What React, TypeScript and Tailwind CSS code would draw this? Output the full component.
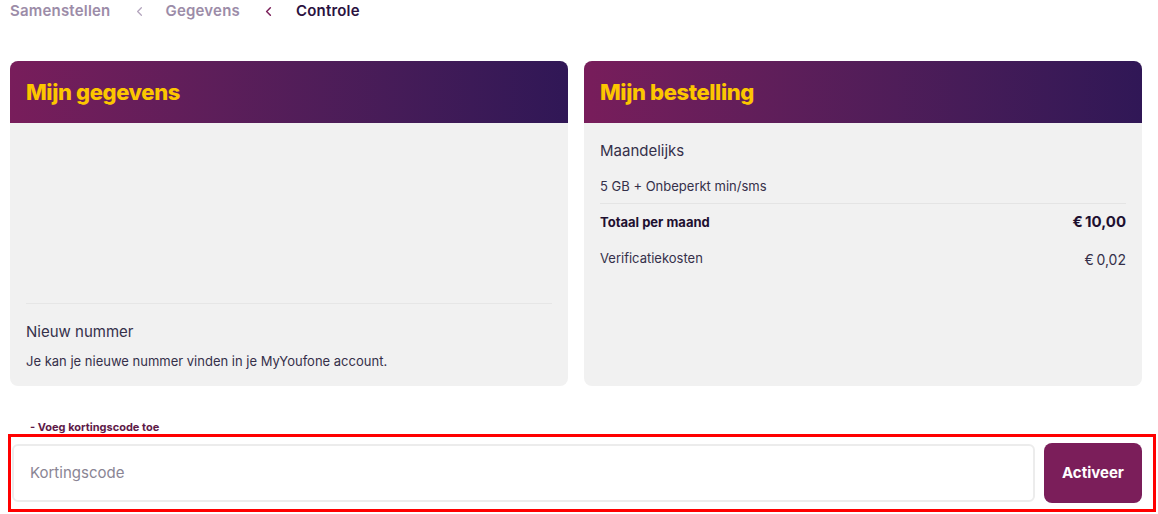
import { ChevronLeft } from "lucide-react";

const font = { fontFamily: "Inter, 'Noto Sans', sans-serif" };

function CardHeader({ title }: { title: string }) {
  return (
    <div className="flex h-[62px] items-center rounded-t-lg bg-gradient-to-r from-[#781d5b] to-[#301756] px-4">
      <h2 className="text-[22px] font-extrabold tracking-[-0.4px] text-[#fcc600]">{title}</h2>
    </div>
  );
}

export default function App() {
  return (
    <div className="h-[514px] w-[1158px] overflow-hidden bg-white text-[#2d2440]" style={font}>
      {/* Breadcrumb */}
      <nav className="flex h-[22px] items-center pl-[10px] text-[15px] font-semibold tracking-[0.2px]">
        <span className="text-[#9c8ca8]">Samenstellen</span>
        <ChevronLeft className="ml-[22px] mr-[18px] text-[#b3a4bd]" size={15} strokeWidth={2} />
        <span className="text-[#9c8ca8]">Gegevens</span>
        <ChevronLeft className="ml-[21px] mr-[20px] text-[#7b1f5a]" size={15} strokeWidth={2.4} />
        <span className="text-[#2a1240]">Controle</span>
      </nav>

      {/* Cards */}
      <div className="mt-[39px] grid grid-cols-2 gap-4 pl-[10px] pr-[16px]">
        <section className="flex h-[325px] flex-col rounded-lg bg-[#f1f1f1]">
          <CardHeader title="Mijn gegevens" />
          <div className="flex flex-1 flex-col justify-end px-4 pb-[15px]">
            <div className="border-t border-[#e6e6e6] pt-[17px]">
              <p className="text-[15px] text-[#35304a]">Nieuw nummer</p>
              <p className="mt-[8px] text-[13px] text-[#35304a]">
                Je kan je nieuwe nummer vinden in je MyYoufone account.
              </p>
            </div>
          </div>
        </section>

        <section className="flex h-[325px] flex-col rounded-lg bg-[#f1f1f1]">
          <CardHeader title="Mijn bestelling" />
          <div className="px-4 pt-[17px] text-[#35304a]">
            <p className="text-[15px]">Maandelijks</p>
            <p className="mt-[14px] pb-[7px] text-[13px]">5 GB + Onbeperkt min/sms</p>
            <div className="flex items-center justify-between border-t border-[#e4e4e4] pt-[7px]">
              <span className="text-[13px] font-bold text-[#1e1030]">Totaal per maand</span>
              <span className="text-[15px] font-bold text-[#1e1030]">€&thinsp;10,00</span>
            </div>
            <div className="mt-[15px] flex items-center justify-between text-[13px]">
              <span>Verificatiekosten</span>
              <span className="text-[14px]">€&thinsp;0,02</span>
            </div>
          </div>
        </section>
      </div>

      {/* Discount code */}
      <p className="mt-[34px] pl-[30px] text-[11px] font-bold leading-[14px] text-[#5e1a48]">
        - Voeg kortingscode toe
      </p>
      <div className="ml-[8px] mr-[2px] flex h-[78px] items-center gap-[9px] border-[3px] border-[#ff0000] pl-[1px] pr-[11px]">
        <div className="flex h-[58px] flex-1 items-center rounded-md border-2 border-[#ececec] bg-white px-4">
          <span className="text-[15px] text-[#8a8594]">Kortingscode</span>
        </div>
        <button className="flex h-[60px] w-[98px] items-center justify-center rounded-lg bg-[#7b1e5a] text-[15px] font-bold text-white">
          Activeer
        </button>
      </div>
    </div>
  );
}
